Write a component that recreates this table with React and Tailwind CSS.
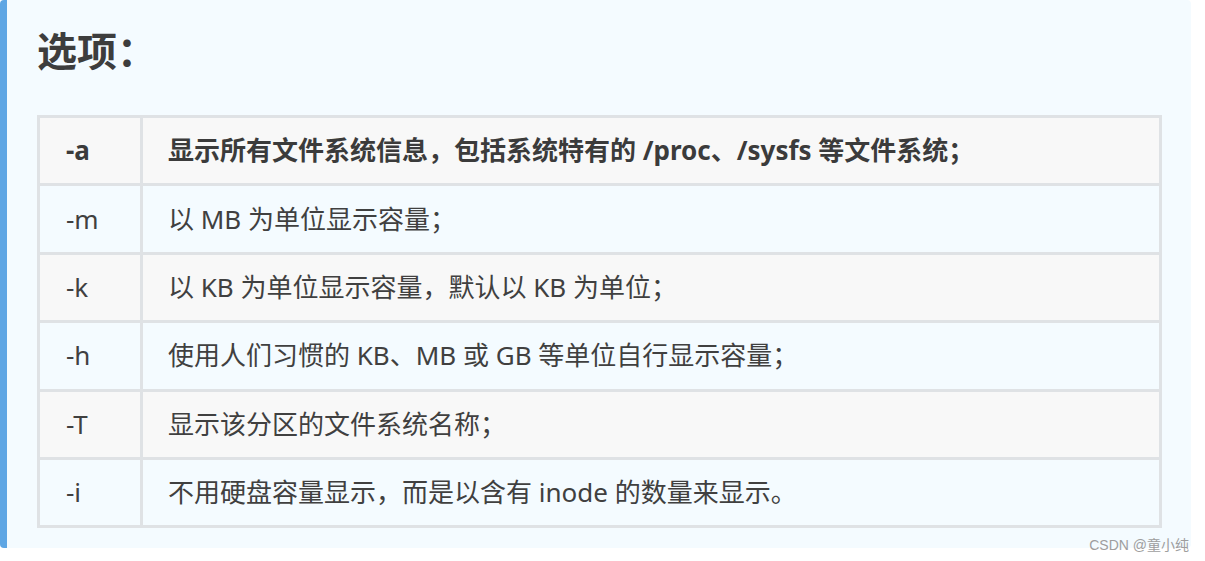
import React from "react";

const rows = [
    { opt: "-a", desc: "显示所有文件系统信息，包括系统特有的 /proc、/sysfs 等文件系统；" },
    { opt: "-m", desc: "以 MB 为单位显示容量；" },
    { opt: "-k", desc: "以 KB 为单位显示容量，默认以 KB 为单位；" },
    { opt: "-h", desc: "使用人们习惯的 KB、MB 或 GB 等单位自行显示容量；" },
    { opt: "-T", desc: "显示该分区的文件系统名称；" },
    { opt: "-i", desc: "不用硬盘容量显示，而是以含有 inode 的数量来显示。" },
];

const App = () => {
    return (
        <div
            className="relative w-[1205px] h-[561px] bg-white overflow-hidden"
            style={{ fontFamily: '"Noto Sans", "Noto Sans CJK SC", sans-serif' }}>
            <div className="w-[1191px] h-[548px] bg-[#f4fbff] border-l-[7px] border-[#5ea6e4] rounded-[4px] pl-[30px] pt-[23px]">
                <h3 className="text-[40px] leading-[56px] font-bold text-[#3d3d3d] mb-[36px]">选项：</h3>
                <div className="w-[1125px] border-[3px] border-[#dfe2e5] text-[26px] text-[#404040]">
                    {rows.map((row, i) => (
                        <div
                            key={row.opt}
                            className={
                                "box-content flex items-center h-[65.4px] " +
                                (i % 2 === 0 ? "bg-[#f8f8f8] " : "bg-[#f4fbff] ") +
                                (i < rows.length - 1 ? "border-b-[3px] border-[#dfe2e5] " : "") +
                                (i === 0 ? "font-bold text-[#3b3b3b]" : "")
                            }>
                            <div className="w-[103px] h-full flex items-center px-[26px] border-r-[3px] border-[#dfe2e5]">
                                {row.opt}
                            </div>
                            <div className="flex-1 px-[25px] whitespace-nowrap">{row.desc}</div>
                        </div>
                    ))}
                </div>
            </div>
            <div
                className="absolute right-[16px] top-[535px] text-[14px] text-[#9e9e9e]"
                style={{ fontFamily: '"Liberation Sans", "Noto Sans CJK SC", sans-serif' }}>
                CSDN @童小纯
            </div>
        </div>
    );
};

export default App;
